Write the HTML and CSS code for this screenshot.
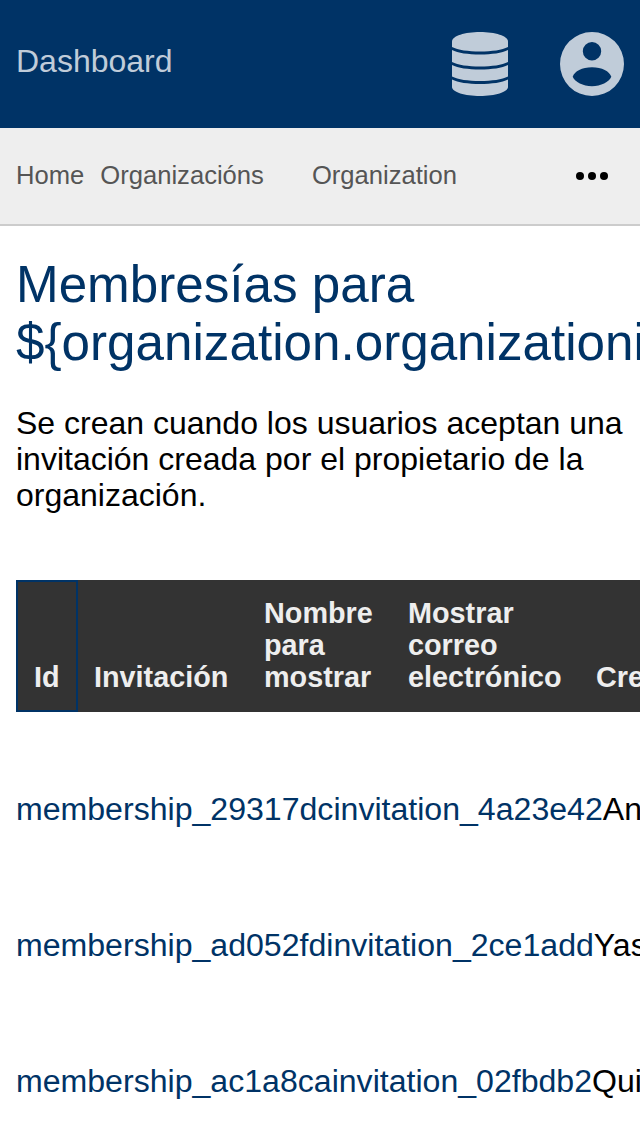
FILE: index.html
```html
<!DOCTYPE html>
<html lang="es">
<head>
<meta charset="utf-8">
<title>Membresías</title>
<link rel="stylesheet" href="styles.css">
</head>
<body>
<header class="topbar">
  <a class="brand">Dashboard</a>
  <div class="top-icons">
    <svg class="icon" viewBox="0 0 56 64" aria-hidden="true"><path d="M0 9.500C0 4 13 0 28 0s28 4 28 9.500V15C50 18 40 19.500 28 19.500S6 18 0 15Z"/><path d="M0 18c6 3 16 4.500 28 4.500S50 21 56 18v12c-6 3-16 4.500-28 4.500S6 33 0 30Z"/><path d="M0 33c6 3 16 4.500 28 4.500S50 36 56 33v11.500C50 47.500 40 49 28 49S6 47.500 0 44.500Z"/><path d="M0 47.500C6 50.500 16 52 28 52s22-1.500 28-4.500V55c0 5-13 9-28 9S0 60 0 55Z"/></svg>
    <svg class="icon icon-user" viewBox="0 0 64 64" aria-hidden="true"><path fill-rule="evenodd" d="M32 0a32 32 0 1 1 0 64a32 32 0 1 1 0-64ZM32 10a9.200 9.200 0 1 0 0 18.400a9.200 9.200 0 1 0 0-18.400ZM32 35.300c-10 0-17.500 4-19.300 9.500C15 50 23 54.300 32 54.300s17-4.300 19.300-9.500C49.500 39.300 42 35.300 32 35.300Z"/></svg>
  </div>
</header>
<nav class="subnav">
  <a class="crumb">Home</a>
  <a class="crumb">Organizacións</a>
  <a class="crumb crumb-wide">Organization</a>
  <svg class="more" viewBox="0 0 32 8" aria-label="Más"><circle cx="4" cy="4" r="4"/><circle cx="16" cy="4" r="4"/><circle cx="28" cy="4" r="4"/></svg>
</nav>
<main class="content">
  <h1 class="title">Membresías para ${organization.organizationid}</h1>
  <p class="lead">Se crean cuando los usuarios aceptan una invitación creada por el propietario de la organización.</p>
  <section class="table">
    <div class="thead">
      <div class="th th-id">Id</div>
      <div class="th th-inv">Invitación</div>
      <div class="th th-name">Nombre para mostrar</div>
      <div class="th th-mail">Mostrar correo electrónico</div>
      <div class="th th-created">Creado</div>
    </div>
    <div class="row"><a class="cell link">membership_29317dc</a><a class="cell link">invitation_4a23e42</a><span class="cell">Ana</span></div>
    <div class="row"><a class="cell link">membership_ad052fd</a><a class="cell link">invitation_2ce1add</a><span class="cell">Yasmin</span></div>
    <div class="row"><a class="cell link">membership_ac1a8ca</a><a class="cell link">invitation_02fbdb2</a><span class="cell">Quique</span></div>
  </section>
</main>
</body>
</html>
```
FILE: styles.css
```css
* { box-sizing: border-box; }
html, body { margin: 0; height: 100%; overflow: hidden; }
body { font-family: "Liberation Sans", Arial, sans-serif; color: #000; background: #fff; }
.topbar { height: 128px; background: #003366; display: flex; align-items: center; justify-content: space-between; padding: 0 16px; }
.brand { font-size: 32px; color: #c0ccd9; margin-bottom: 6px; }
.top-icons { display: flex; align-items: center; gap: 52px; }
.icon { height: 64px; width: 56px; fill: #c0ccd9; display: block; }
.icon-user { width: 64px; }
.subnav { height: 98px; background: #eeeeee; border-bottom: 2px solid #cccccc; display: flex; align-items: center; padding: 0 16px; font-size: 25.6px; color: #555555; }
.crumb { margin-right: 16px; padding-bottom: 2px; }
.crumb-wide { margin-left: 32px; }
.more { margin-left: auto; margin-right: 16px; width: 32px; height: 8px; fill: #000; }
.content { padding: 30px 0 0 16px; }
.title { margin: 0; font-size: 51.2px; line-height: 58px; font-weight: 400; color: #003366; width: 1000px; }
.lead { margin: 33px 0 0; font-size: 32px; line-height: 36px; width: 612px; }
.table { margin-top: 67px; width: 1400px; }
.thead { display: flex; height: 132px; background: #333333; color: #eeeeee; font-size: 28.8px; line-height: 32px; font-weight: 700; width: 1400px; }
.th { padding: 16px 16px 19px; display: flex; align-items: flex-end; }
.th-id { width: 62px; border: 2px solid #003366; padding: 16px 16px 17px; }
.th-inv { width: 170px; }
.th-name { width: 144px; }
.th-mail { width: 188px; }
.row { display: block; font-size: 32.08px; line-height: 36px; padding: 79px 0 21px; white-space: nowrap; }
.cell { display: table-cell; }
.link { color: #003366; }
```
